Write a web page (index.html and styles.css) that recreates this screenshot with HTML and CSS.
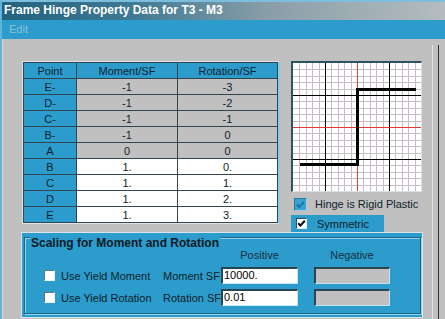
FILE: index.html
```html
<!DOCTYPE html>
<html>
<head>
<meta charset="utf-8">
<link rel="stylesheet" href="styles.css">
</head>
<body>
<div class="window">
  <div class="titlebar">Frame Hinge Property Data for T3 - M3</div>
  <div class="menubar"><span class="menu-item">Edit</span></div>
  <div class="client">
    <div class="main">
      <div class="top-row">
        <div class="table-frame">
          <table class="hinge-table">
            <colgroup><col class="c-point"><col class="c-moment"><col class="c-rot"></colgroup>
            <thead>
              <tr><th>Point</th><th>Moment/SF</th><th>Rotation/SF</th></tr>
            </thead>
            <tbody>
              <tr class="ro"><th>E-</th><td>-1</td><td>-3</td></tr>
              <tr class="ro"><th>D-</th><td>-1</td><td>-2</td></tr>
              <tr class="ro"><th>C-</th><td>-1</td><td>-1</td></tr>
              <tr class="ro"><th>B-</th><td>-1</td><td>0</td></tr>
              <tr class="ro"><th>A</th><td>0</td><td>0</td></tr>
              <tr><th>B</th><td>1.</td><td>0.</td></tr>
              <tr><th>C</th><td>1.</td><td>1.</td></tr>
              <tr><th>D</th><td>1.</td><td>2.</td></tr>
              <tr><th>E</th><td>1.</td><td>3.</td></tr>
            </tbody>
          </table>
        </div>
        <div class="side">
          <div class="graph">
            <svg width="128" height="128" viewBox="0 0 128 128" shape-rendering="crispEdges">
              <rect width="128" height="128" fill="#ffffff"/>
              <path stroke="#c6bec6" stroke-width="1" fill="none" d="M6.5 0V128M13.5 0V128M19.5 0V128M26.5 0V128M38.5 0V128M45.5 0V128M51.5 0V128M58.5 0V128M70.5 0V128M77.5 0V128M83.5 0V128M90.5 0V128M102.5 0V128M109.5 0V128M115.5 0V128M122.5 0V128M0 6.5H128M0 13.5H128M0 19.5H128M0 26.5H128M0 38.5H128M0 45.5H128M0 51.5H128M0 58.5H128M0 70.5H128M0 77.5H128M0 83.5H128M0 90.5H128M0 102.5H128M0 109.5H128M0 115.5H128M0 122.5H128"/>
              <path stroke="#000000" stroke-width="1" fill="none" d="M32.5 0V128M96.5 0V128M0 32.5H128M0 96.5H128"/>
              <path stroke="#e03a3a" stroke-width="1" fill="none" d="M64.5 0V128M0 64.5H128"/>
              <path stroke="#000000" stroke-width="3" fill="none" d="M7 101.5H64.5V26.5H123"/>
            </svg>
          </div>
          <div class="check-row rigid">
            <span class="box box-blue"><svg width="11" height="11" viewBox="0 0 11 11"><path d="M2 5.5L4.3 8L9 2.8" stroke="#1a78a8" stroke-width="2" fill="none"/></svg></span>
            <span class="check-label">Hinge is Rigid Plastic</span>
          </div>
          <div class="check-row symmetric">
            <span class="box box-white"><svg width="9" height="9" viewBox="0 0 9 9"><path d="M1.2 4.2L3.4 6.6L7.8 1.8" stroke="#000" stroke-width="2" fill="none"/></svg></span>
            <span class="check-label">Symmetric</span>
          </div>
        </div>
      </div>
      <div class="scaling-panel">
        <div class="groupbox">
          <span class="legend">Scaling for Moment and Rotation</span>
          <div class="scale-grid">
            <span></span><span></span>
            <span class="col-head">Positive</span>
            <span class="col-head col-neg">Negative</span>

            <div class="opt"><span class="box box-plain"></span><span>Use Yield Moment</span></div>
            <span class="field-label">Moment SF</span>
            <div class="input">10000.</div>
            <div class="input disabled"></div>

            <div class="opt"><span class="box box-plain"></span><span>Use Yield Rotation</span></div>
            <span class="field-label">Rotation SF</span>
            <div class="input">0.01</div>
            <div class="input disabled"></div>
          </div>
        </div>
      </div>
    </div>
    <div class="rail"><div class="rail-line"></div></div>
  </div>
</div>
</body>
</html>
```

FILE: styles.css
```css
* { box-sizing: border-box; }
html, body { margin: 0; padding: 0; background: #c0c0c0; }
body {
  font-family: "Liberation Sans", Arial, sans-serif;
  font-size: 11px;
  color: #0e1e2a;
}
.window {
  width: 445px;
  height: 319px;
  overflow: hidden;
  background: #c0c0c0;
  border-left: 2px solid #62b2da;
  display: flex;
  flex-direction: column;
}
.titlebar {
  height: 20px;
  border-top: 2px solid #7cbedc;
  background: linear-gradient(90deg, #22627f 0%, #3f7a94 30%, #8a9ea8 60%, #b4bcbf 100%);
  color: #ffffff;
  font-weight: bold;
  font-size: 12px;
  line-height: 17px;
  padding-left: 2px;
  white-space: nowrap;
}
.menubar {
  height: 19px;
  background: #2c9ccc;
  padding-left: 7px;
  line-height: 19px;
}
.menu-item { color: #8cc0d8; }
.client {
  flex: 1;
  display: flex;
  border-left: 1px solid #d4d6d8;
}
.main {
  width: 429px;
  padding-left: 19px;
  padding-top: 22px;
}
.rail {
  flex: 1;
  margin-top: 6px;
  border-left: 1px solid #e2e6e8;
  padding-left: 5px;
}
.rail-line {
  height: 100%;
  border-left: 1px solid #2c3438;
}
.top-row {
  display: flex;
  align-items: flex-start;
}
.table-frame {
  border-top: 1px solid #dfe3e5;
  border-left: 1px solid #dfe3e5;
  border-right: 2px solid #8ccbe6;
  border-bottom: 1px solid #dfe3e5;
  margin-right: 11px;
}
.hinge-table {
  border-collapse: collapse;
  table-layout: fixed;
  width: 254px;
  border: 1px solid #1c3646;
}
.c-point { width: 53px; }
.c-moment { width: 101px; }
.c-rot { width: 100px; }
.hinge-table th, .hinge-table td {
  height: 16px;
  padding: 0;
  border: 1px solid #33464f;
  text-align: center;
  font-weight: normal;
  line-height: 14px;
  color: #0e1e2a;
}
.hinge-table thead th { background: #2c9ccc; color: #0c2232; }
.hinge-table tbody th { background: #2c9ccc; color: #0c2232; }
.hinge-table td { background: #ffffff; }
.hinge-table tr.ro td { background: #c0c0c0; }

.side {
  display: flex;
  flex-direction: column;
  align-items: flex-start;
}
.graph {
  width: 131px;
  height: 131px;
  border-top: 2px solid #2a5464;
  border-left: 2px solid #2a5464;
  border-right: 1px solid #dce2e4;
  border-bottom: 1px solid #dce2e4;
}
.graph svg { display: block; }
.check-row {
  display: flex;
  align-items: center;
}
.rigid {
  height: 16px;
  margin-top: 4px;
  padding-left: 3px;
}
.rigid .check-label { margin-left: 8px; }
.symmetric {
  height: 17px;
  margin-top: 3px;
  width: 93px;
  padding-left: 5px;
  background: #2c9ccc;
}
.symmetric .check-label { margin-left: 10px; }
.box {
  display: inline-flex;
  align-items: center;
  justify-content: center;
  flex: none;
}
.box-blue {
  width: 13px;
  height: 13px;
  background: #3aa2d0;
  border-top: 1px solid #2a7aa0;
  border-left: 1px solid #2a7aa0;
  border-right: 1px solid #9ad2ea;
  border-bottom: 1px solid #9ad2ea;
}
.box-white {
  width: 11px;
  height: 11px;
  background: #ffffff;
  border-top: 1px solid #3a4a52;
  border-left: 1px solid #3a4a52;
  border-right: 1px solid #d8eef8;
  border-bottom: 1px solid #d8eef8;
}
.box-plain {
  width: 11px;
  height: 11px;
  background: #ffffff;
  border-top: 1px solid #5a7a88;
  border-left: 1px solid #5a7a88;
  border-right: 1px solid #e6f4fa;
  border-bottom: 1px solid #e6f4fa;
}

.scaling-panel {
  width: 402px;
  height: 86px;
  margin-left: -1px;
  background: #2c9ccc;
  border: 1px solid #dbe4e8;
  padding: 4px 1px 3px 2px;
}
.groupbox {
  position: relative;
  height: 100%;
  border: 1px solid #1c6888;
  box-shadow: inset 1px 1px 0 #92d2ee, 1px 1px 0 #92d2ee;
  padding: 11px 0 0 19px;
}
.legend {
  position: absolute;
  left: 5px;
  top: -1px;
  background: #2c9ccc;
  padding: 0 1px;
  font-weight: bold;
  font-size: 12px;
  line-height: 13px;
  color: #0c1a26;
}
.scale-grid {
  display: grid;
  grid-template-columns: 119px 58px 77px 92px;
  grid-template-rows: 13px 17px 17px;
  column-gap: 0;
  row-gap: 5px;
  align-items: center;
  white-space: nowrap;
}
.scale-grid .col-head {
  text-align: center;
  color: #16303e;
  line-height: 13px;
}
.scale-grid .col-neg { padding-left: 16px; }
.opt {
  display: flex;
  align-items: center;
  gap: 6px;
  color: #0e1e2a;
}
.field-label { color: #0e1e2a; }
.input {
  height: 17px;
  background: #ffffff;
  border-top: 2px solid #2a4450;
  border-left: 2px solid #2a4450;
  border-right: 1px solid #c4e6f4;
  border-bottom: 1px solid #c4e6f4;
  padding-left: 1px;
  line-height: 13px;
  color: #000;
}
.input.disabled {
  background: #c0c0c0;
  margin-left: 16px;
  width: 76px;
}
```
